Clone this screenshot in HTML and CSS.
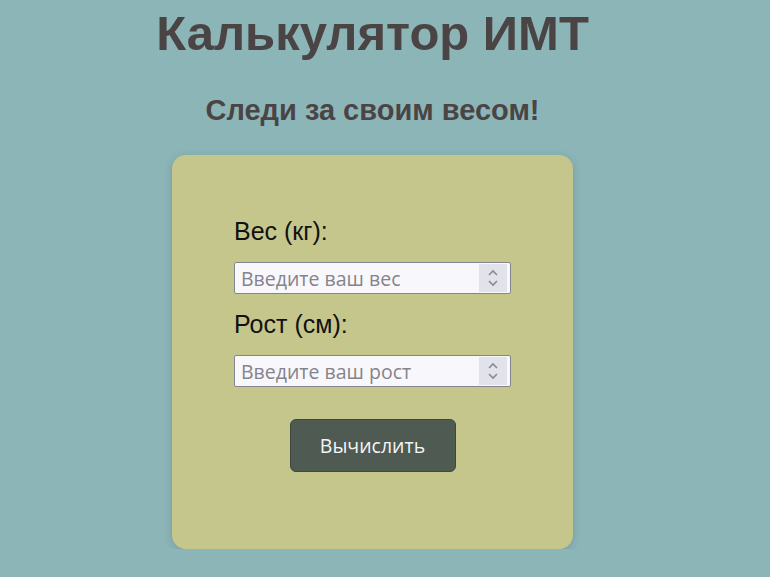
FILE: index.html
```html
<!DOCTYPE html>
<html lang="ru">
<head>
    <meta charset="UTF-8">
    <meta name="viewport" content="width=device-width, initial-scale=1.0">
    <title>Калькулятор ИМТ</title>
    <link rel="stylesheet" href="styles.css">
</head>
<body>
    <div class="page">
        <h1>Калькулятор ИМТ</h1>
        <h2>Следи за своим весом!</h2>
        <div class="card">
            <form class="bmi-form" onsubmit="return false">
                <label for="weight">Вес (кг):</label>
                <div class="field">
                    <input type="number" id="weight" placeholder="Введите ваш вес">
                    <span class="spin">
                        <svg width="14" height="24" viewBox="0 0 14 24"><path d="M3 9 L7 5 L11 9 M3 15 L7 19 L11 15" fill="none" stroke="#8a8a94" stroke-width="1.6"/></svg>
                    </span>
                </div>
                <label for="height">Рост (см):</label>
                <div class="field">
                    <input type="number" id="height" placeholder="Введите ваш рост">
                    <span class="spin">
                        <svg width="14" height="24" viewBox="0 0 14 24"><path d="M3 9 L7 5 L11 9 M3 15 L7 19 L11 15" fill="none" stroke="#8a8a94" stroke-width="1.6"/></svg>
                    </span>
                </div>
                <button type="submit">Вычислить</button>
            </form>
        </div>
    </div>
</body>
</html>
```

FILE: styles.css
```css
body { margin: 0; background-color: #8cb5b8; font-family: "Liberation Sans", Arial, sans-serif; }
.page { width: 745px; text-align: center; }
h1 { margin: 5px 0 0; font-size: 49px; line-height: 56px; color: #4b4444; }
h2 { margin: 33px 0 0; font-size: 29px; line-height: 33px; color: #4b4444; }
.card { width: 277px; margin: 28px auto 0; padding: 62px 62px 77px; background-color: #c5c68b; border-radius: 14px; box-shadow: 0 2px 8px rgba(0, 0, 0, 0.15); text-align: left; }
.bmi-form { display: flex; flex-direction: column; }
label { font-size: 25px; line-height: 29px; color: #111; margin-bottom: 16px; }
.field { display: flex; align-items: stretch; height: 28px; padding: 1px; margin-bottom: 16px; background-color: #f8f8fc; border: 1px solid #85858f; border-radius: 2px; }
.field input { flex: 1; min-width: 0; border: none; outline: none; background: transparent; padding: 0 5px; font-family: "Open Sans", sans-serif; font-size: 19.5px; color: #333; -moz-appearance: textfield; }
.field input::placeholder { color: #85838b; }
.field input::-webkit-inner-spin-button, .field input::-webkit-outer-spin-button { -webkit-appearance: none; margin: 0; }
.spin { width: 28px; margin-right: 2px; display: flex; align-items: center; justify-content: center; background-color: #e2e2ea; }
button { align-self: center; margin-top: 16px; width: 166px; height: 53px; background-color: #4f5a52; color: #f4f4f4; border: 1px solid #3f4741; border-radius: 6px; font-family: "Open Sans", sans-serif; font-size: 19.5px; cursor: pointer; }
```
